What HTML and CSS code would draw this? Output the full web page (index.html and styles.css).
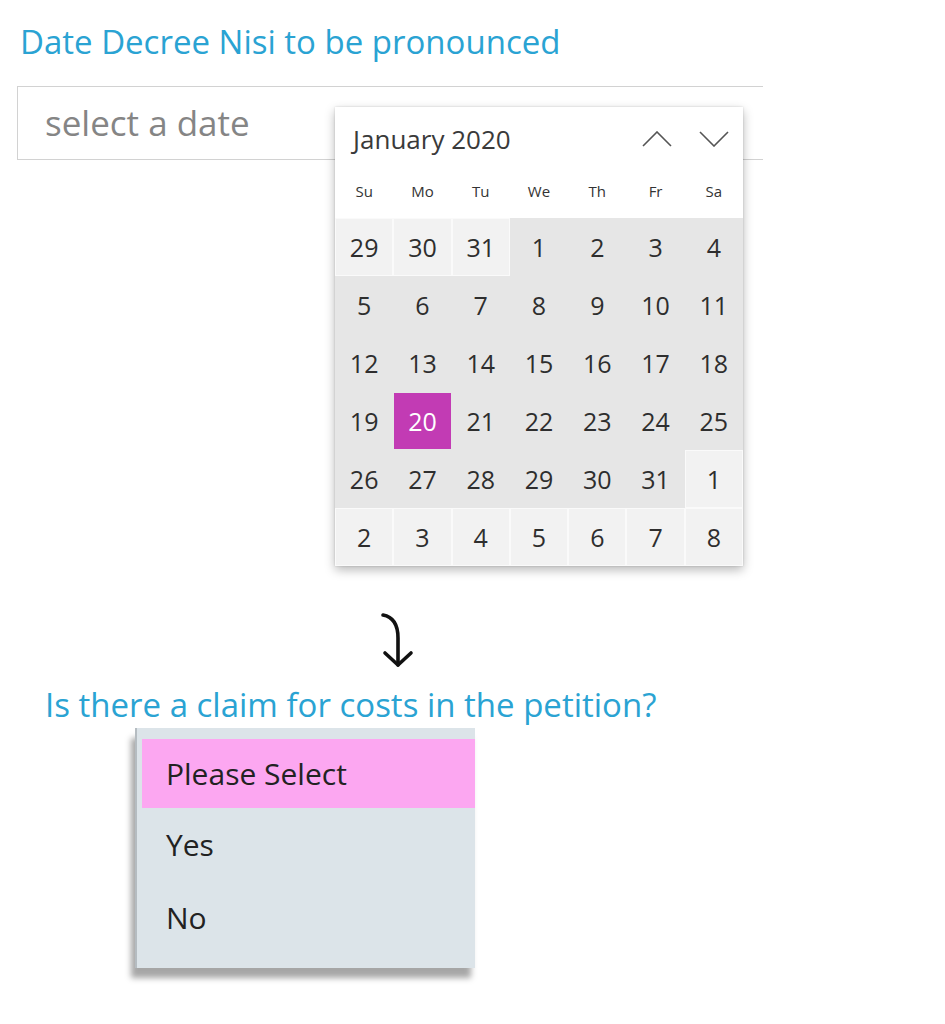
FILE: index.html
```html
<!DOCTYPE html>
<html>

<head>
  <meta name="viewport" content="width=device-width, initial-scale=1">
  <link rel="stylesheet" href="styles.css">
</head>

<body>
  <div class="page">

    <h2 class="field-label first">Date Decree Nisi to be pronounced</h2>
    <div class="date-input">select a date</div>

    <!-- calendar popup that opens over the date input -->
    <div class="calendar">
      <div class="cal-head">
        <span class="cal-month">January 2020</span>
        <span class="cal-nav">
          <svg width="30" height="16" viewBox="0 0 30 16"><path d="M1 15 L15 1 L29 15" fill="none" stroke="#555" stroke-width="1.6"/></svg>
          <svg width="30" height="16" viewBox="0 0 30 16"><path d="M1 1 L15 15 L29 1" fill="none" stroke="#555" stroke-width="1.6"/></svg>
        </span>
      </div>
      <div class="cal-days">
        <span>Su</span><span>Mo</span><span>Tu</span><span>We</span><span>Th</span><span>Fr</span><span>Sa</span>
      </div>
      <div class="cal-grid">
        <span class="day out">29</span><span class="day out">30</span><span class="day out">31</span>
        <span class="day">1</span><span class="day">2</span><span class="day">3</span><span class="day">4</span>
        <span class="day">5</span><span class="day">6</span><span class="day">7</span><span class="day">8</span>
        <span class="day">9</span><span class="day">10</span><span class="day">11</span>
        <span class="day">12</span><span class="day">13</span><span class="day">14</span><span class="day">15</span>
        <span class="day">16</span><span class="day">17</span><span class="day">18</span>
        <span class="day">19</span><span class="day selected">20</span><span class="day">21</span><span class="day">22</span>
        <span class="day">23</span><span class="day">24</span><span class="day">25</span>
        <span class="day">26</span><span class="day">27</span><span class="day">28</span><span class="day">29</span>
        <span class="day">30</span><span class="day">31</span><span class="day out">1</span>
        <span class="day out">2</span><span class="day out">3</span><span class="day out">4</span><span class="day out">5</span>
        <span class="day out">6</span><span class="day out">7</span><span class="day out">8</span>
      </div>
    </div>

    <svg class="flow-arrow" width="44" height="58" viewBox="0 0 44 58">
      <path d="M8 3 C19 5 23 14 23 26 L23 53" fill="none" stroke="#111" stroke-width="3.6" stroke-linecap="round"/>
      <path d="M10 41 L23 53 L36 41" fill="none" stroke="#111" stroke-width="3.6" stroke-linecap="round" stroke-linejoin="round"/>
    </svg>

    <h2 class="field-label second">Is there a claim for costs in the petition?</h2>
    <div class="select-list">
      <div class="option active">Please Select</div>
      <div class="option">Yes</div>
      <div class="option">No</div>
    </div>

  </div>
</body>

</html>
```

FILE: styles.css
```css
body {
  margin: 0;
  background: #fff;
  font-family: "Open Sans", "Noto Sans", Arial, sans-serif;
  color: #2b2b2b;
}

* {
  box-sizing: border-box;
}

.page {
  padding: 20px 0 56px;
}

/* Blue question labels */
.field-label {
  margin: 0;
  font-size: 33px;
  font-weight: 400;
  line-height: 44px;
  color: #2aa3d3;
}

.first {
  margin-left: 20px;
}

.second {
  margin-top: 13px;
  margin-left: 45px;
}

/* Date input */
.date-input {
  margin: 22px 0 0 17px;
  width: 746px;
  height: 74px;
  border: 1px solid #d2d2d2;
  border-right: none;
  padding: 1px 0 0 27px;
  font-size: 35px;
  line-height: 70px;
  color: #858585;
}

/* Calendar popup */
.calendar {
  position: relative;
  margin: -53px 0 0 335px;
  width: 408px;
  background: #fff;
  box-shadow: 0 4px 10px rgba(0, 0, 0, 0.28), 0 0 2px rgba(0, 0, 0, 0.15);
}

.cal-head {
  display: flex;
  align-items: center;
  justify-content: space-between;
  height: 60px;
  padding: 4px 14px 0 18px;
}

.cal-month {
  font-size: 26px;
  color: #3a3a3a;
}

.cal-nav {
  display: flex;
  gap: 27px;
}

.cal-days {
  display: grid;
  grid-template-columns: repeat(7, 1fr);
  height: 51px;
  align-items: center;
  padding-bottom: 4px;
  font-size: 15px;
  font-weight: 500;
  color: #333;
  text-align: center;
}

.cal-grid {
  display: grid;
  grid-template-columns: repeat(7, 1fr);
  grid-auto-rows: 58px;
  background: #e6e6e6;
}

.day {
  display: flex;
  align-items: center;
  justify-content: center;
  font-size: 25px;
  color: #2e2e2e;
  border: 1px solid #e6e6e6;
}

.day.out {
  background: #f2f2f2;
  border-color: #fafafa;
}

.day.selected {
  background: #c23bb4;
  color: #fff;
}

.flow-arrow {
  display: block;
  margin: 46px 0 0 375px;
}

/* Dropdown list */
.select-list {
  margin: 1px 0 0 135px;
  width: 340px;
  height: 240px;
  padding: 11px 0 0 5px;
  background: #dce4e9;
  border-left: 2px solid #b5bcc1;
  box-shadow: -4px 10px 6px rgba(0, 0, 0, 0.35);
}

.option {
  height: 73px;
  padding-left: 24px;
  font-size: 30px;
  line-height: 73px;
  color: #222;
}

.option.active {
  height: 69px;
  line-height: 69px;
  background: #fca7f1;
}
```
